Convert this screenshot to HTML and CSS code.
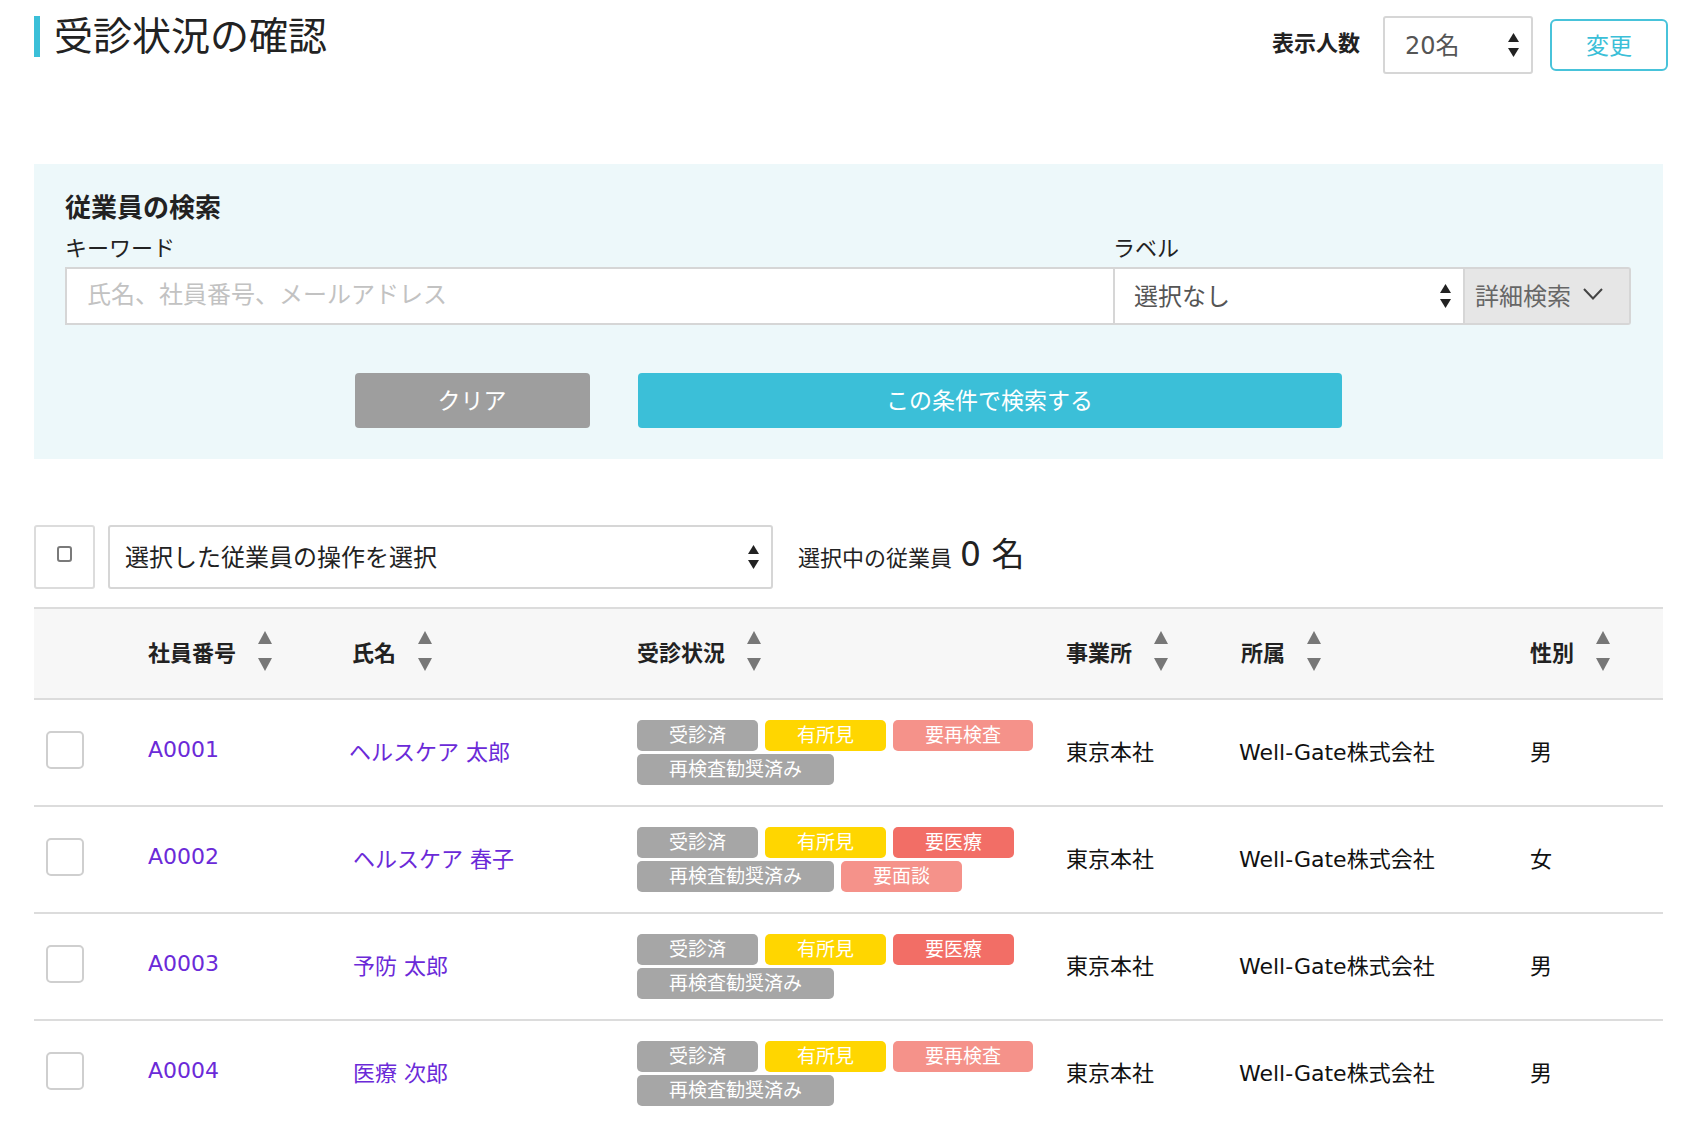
FILE: index.html
```html
<!DOCTYPE html>
<html lang="ja">
<head>
  <meta charset="UTF-8" />
  <title>受診状況の確認</title>
  <link rel="stylesheet" href="styles.css">
</head>
<body>
  <div class="page">
    <header class="page-head">
      <h1 class="page-title">受診状況の確認</h1>
      <div class="per-page">
        <span class="per-page-label">表示人数</span>
        <div class="fake-select select-count">
          <span>20名</span>
          <svg class="updown" width="11" height="24" viewBox="0 0 11 24"><polygon points="5.5,0 11,9 0,9" /><polygon points="0,15 11,15 5.5,24" /></svg>
        </div>
        <button class="btn-outline">変更</button>
      </div>
    </header>

    <section class="search-panel">
      <h2>従業員の検索</h2>
      <div class="search-row">
        <div class="field field-keyword">
          <label>キーワード</label>
          <input class="text-input" type="text" placeholder="氏名、社員番号、メールアドレス" />
        </div>
        <div class="field field-label">
          <label>ラベル</label>
          <div class="fake-select select-label">
            <span>選択なし</span>
            <svg class="updown" width="11" height="24" viewBox="0 0 11 24"><polygon points="5.5,0 11,9 0,9" /><polygon points="0,15 11,15 5.5,24" /></svg>
          </div>
        </div>
        <button class="btn-detail">詳細検索
          <svg width="20" height="12" viewBox="0 0 20 12"><polyline points="1,1 10,10.5 19,1" fill="none" stroke="#444" stroke-width="2" /></svg>
        </button>
      </div>
      <div class="search-actions">
        <button class="btn-clear">クリア</button>
        <button class="btn-search">この条件で検索する</button>
      </div>
    </section>

    <div class="bulk-row">
      <div class="bulk-check"><span class="mini-box"></span></div>
      <div class="fake-select bulk-select">
        <span>選択した従業員の操作を選択</span>
        <svg class="updown" width="11" height="24" viewBox="0 0 11 24"><polygon points="5.5,0 11,9 0,9" /><polygon points="0,15 11,15 5.5,24" /></svg>
      </div>
      <div class="selected-count">選択中の従業員<span class="count-num">0 名</span></div>
    </div>

    <table class="emp-table">
      <colgroup>
        <col style="width:114px"><col style="width:201px"><col style="width:288px"><col style="width:429px"><col style="width:173px"><col style="width:291px"><col>
      </colgroup>
      <thead>
        <tr>
          <th></th>
          <th><span class="th-inner">社員番号<svg class="sort" width="14" height="40" viewBox="0 0 14 40"><polygon points="7,0 14,13 0,13" /><polygon points="0,27 14,27 7,40" /></svg></span></th>
          <th><span class="th-inner th-name">氏名<svg class="sort" width="14" height="40" viewBox="0 0 14 40"><polygon points="7,0 14,13 0,13" /><polygon points="0,27 14,27 7,40" /></svg></span></th>
          <th><span class="th-inner">受診状況<svg class="sort" width="14" height="40" viewBox="0 0 14 40"><polygon points="7,0 14,13 0,13" /><polygon points="0,27 14,27 7,40" /></svg></span></th>
          <th><span class="th-inner">事業所<svg class="sort" width="14" height="40" viewBox="0 0 14 40"><polygon points="7,0 14,13 0,13" /><polygon points="0,27 14,27 7,40" /></svg></span></th>
          <th><span class="th-inner th-dept">所属<svg class="sort" width="14" height="40" viewBox="0 0 14 40"><polygon points="7,0 14,13 0,13" /><polygon points="0,27 14,27 7,40" /></svg></span></th>
          <th><span class="th-inner">性別<svg class="sort" width="14" height="40" viewBox="0 0 14 40"><polygon points="7,0 14,13 0,13" /><polygon points="0,27 14,27 7,40" /></svg></span></th>
        </tr>
      </thead>
      <tbody>
        <tr>
          <td><span class="row-check"></span></td>
          <td><a class="link">A0001</a></td>
          <td><a class="link">ヘルスケア 太郎</a></td>
          <td>
            <div class="badges">
              <span class="badge gray">受診済</span><span class="badge yellow">有所見</span><span class="badge salmon">要再検査</span><span class="badge gray">再検査勧奨済み</span>
            </div>
          </td>
          <td>東京本社</td>
          <td>Well-Gate株式会社</td>
          <td>男</td>
        </tr>
        <tr>
          <td><span class="row-check"></span></td>
          <td><a class="link">A0002</a></td>
          <td><a class="link name-shift">ヘルスケア 春子</a></td>
          <td>
            <div class="badges">
              <span class="badge gray">受診済</span><span class="badge yellow">有所見</span><span class="badge red">要医療</span><span class="badge gray">再検査勧奨済み</span><span class="badge salmon">要面談</span>
            </div>
          </td>
          <td>東京本社</td>
          <td>Well-Gate株式会社</td>
          <td>女</td>
        </tr>
        <tr>
          <td><span class="row-check"></span></td>
          <td><a class="link">A0003</a></td>
          <td><a class="link name-shift">予防 太郎</a></td>
          <td>
            <div class="badges">
              <span class="badge gray">受診済</span><span class="badge yellow">有所見</span><span class="badge red">要医療</span><span class="badge gray">再検査勧奨済み</span>
            </div>
          </td>
          <td>東京本社</td>
          <td>Well-Gate株式会社</td>
          <td>男</td>
        </tr>
        <tr>
          <td><span class="row-check"></span></td>
          <td><a class="link">A0004</a></td>
          <td><a class="link name-shift">医療 次郎</a></td>
          <td>
            <div class="badges">
              <span class="badge gray">受診済</span><span class="badge yellow">有所見</span><span class="badge salmon">要再検査</span><span class="badge gray">再検査勧奨済み</span>
            </div>
          </td>
          <td>東京本社</td>
          <td>Well-Gate株式会社</td>
          <td>男</td>
        </tr>
      </tbody>
    </table>
  </div>
</body>
</html>
```

FILE: styles.css
```css
body {
  margin: 0;
  font-family: "DejaVu Sans", "Noto Sans CJK JP", sans-serif;
  color: #222;
  background: #fff;
}

.page {
  padding: 16px 45px 0 34px;
}

/* header */
.page-head {
  display: flex;
  justify-content: space-between;
  align-items: flex-start;
  height: 58px;
  margin: 0 -5px 90px 0;
}
.page-title {
  margin: 0;
  font-size: 39px;
  font-weight: 400;
  line-height: 41px;
  border-left: 6px solid #3bbfd8;
  padding-left: 14px;
  color: #222;
}
.per-page {
  display: flex;
  align-items: center;
}
.per-page-label {
  font-size: 22px;
  font-weight: 700;
  margin: 0 23px 8px 0;
}

.fake-select {
  display: flex;
  align-items: center;
  justify-content: space-between;
  box-sizing: border-box;
  background: #fff;
  border: 2px solid #d6d6d6;
}
.fake-select span {
  margin-top: -3px;
}
.updown polygon {
  fill: #222;
}
.select-count {
  width: 150px;
  height: 58px;
  border-radius: 3px;
  padding: 0 12px 0 20px;
  font-size: 24px;
  color: #555;
}
.btn-outline {
  margin-left: 17px;
  width: 118px;
  height: 52px;
  padding-bottom: 4px;
  border: 2px solid #48c3da;
  border-radius: 6px;
  background: #fff;
  color: #3bbfd8;
  font-size: 23px;
  font-family: inherit;
}

/* search panel */
.search-panel {
  background: #edf8fa;
  padding: 28px 32px 31px 31px;
}
.search-panel h2 {
  margin: 0;
  font-size: 26px;
  font-weight: 700;
  line-height: 32px;
}
.search-row {
  display: flex;
  align-items: flex-end;
  margin-top: 12px;
}
.field label {
  display: block;
  font-size: 22px;
  line-height: 26px;
  margin-bottom: 5px;
}
.field-keyword {
  flex: 1;
}
.text-input {
  display: block;
  width: 100%;
  box-sizing: border-box;
  height: 58px;
  border: 2px solid #d6d6d6;
  border-right: 0;
  padding: 0 20px 2px;
  font-size: 24px;
  font-family: inherit;
  background: #fff;
}
.text-input::placeholder {
  color: #c2c2c2;
}
.field-label {
  width: 352px;
}
.select-label {
  height: 58px;
  padding: 0 12px 0 19px;
  font-size: 24px;
  color: #555;
}
.btn-detail {
  display: flex;
  align-items: center;
  gap: 12px;
  width: 166px;
  height: 58px;
  box-sizing: border-box;
  padding: 0 0 4px 10px;
  background: #e6e6e6;
  border: 2px solid #d6d6d6;
  border-left: 0;
  border-radius: 0 3px 3px 0;
  font-size: 24px;
  font-family: inherit;
  color: #666;
}

.search-actions {
  display: flex;
  justify-content: center;
  gap: 48px;
  margin-top: 48px;
}
.search-actions button {
  height: 55px;
  padding-bottom: 4px;
  border: 0;
  border-radius: 4px;
  color: #fff;
  font-size: 23px;
  font-family: inherit;
}
.btn-clear {
  width: 235px;
  background: #9e9e9e;
}
.btn-search {
  width: 704px;
  background: #3bbfd8;
}

/* bulk actions */
.bulk-row {
  display: flex;
  align-items: center;
  margin-top: 66px;
  height: 64px;
}
.bulk-check {
  display: flex;
  align-items: center;
  justify-content: center;
  width: 61px;
  height: 64px;
  box-sizing: border-box;
  border: 2px solid #dcdcdc;
  border-radius: 3px;
}
.mini-box {
  width: 15px;
  height: 16px;
  box-sizing: border-box;
  border: 2px solid #7a7a7a;
  border-radius: 3px;
  margin-top: -6px;
}
.bulk-select {
  width: 665px;
  height: 64px;
  margin-left: 13px;
  border-radius: 3px;
  padding: 0 12px 0 15px;
  font-size: 24px;
  color: #222;
}
.selected-count {
  margin-left: 25px;
  font-size: 22px;
  margin-top: -10px;
}
.count-num {
  font-size: 33px;
  margin-left: 8px;
}

/* table */
.emp-table {
  width: 100%;
  margin-top: 18px;
  border-collapse: collapse;
  table-layout: fixed;
}
.emp-table th {
  height: 84px;
  background: #f7f7f7;
  border-top: 2px solid #dcdcdc;
  border-bottom: 2px solid #dcdcdc;
  padding: 0 0 5px;
  text-align: left;
  font-size: 22px;
  font-weight: 700;
  vertical-align: middle;
}
.th-inner {
  display: inline-flex;
  align-items: center;
  gap: 22px;
}
.th-name {
  margin-left: 3px;
}
.th-dept {
  margin-left: 2px;
}
.sort polygon {
  fill: #777;
}
.emp-table td {
  height: 99px;
  border-bottom: 2px solid #dcdcdc;
  padding: 0 0 6px;
  font-size: 22px;
  color: #111;
  vertical-align: middle;
}
.row-check {
  display: block;
  width: 38px;
  height: 38px;
  box-sizing: border-box;
  margin-left: 12px;
  border: 2px solid #cfcfcf;
  border-radius: 5px;
  background: #fff;
}
.link {
  color: #6b2ad8;
}
.name-shift {
  margin-left: 4px;
}

.badges {
  display: flex;
  flex-wrap: wrap;
  gap: 3px 7px;
  width: 420px;
  margin-top: 6px;
}
.badge {
  height: 31px;
  line-height: 31px;
  padding: 0 32px;
  border-radius: 5px;
  font-size: 19px;
  color: #fff;
}
.badge.gray { background: #a6a6a6; }
.badge.yellow { background: #ffd600; }
.badge.salmon { background: #f5928a; }
.badge.red { background: #f26e66; }
```
